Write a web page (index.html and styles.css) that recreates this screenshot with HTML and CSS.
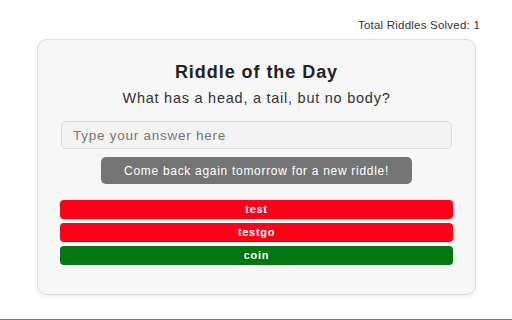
FILE: index.html
```html
<!DOCTYPE html>
<html>
<head>
<meta charset="utf-8">
<link rel="stylesheet" href="styles.css">
</head>
<body>
<div class="page">
  <div class="total">Total Riddles Solved: 1</div>
  <div class="card">
    <h1 class="title">Riddle of the Day</h1>
    <p class="question">What has a head, a tail, but no body?</p>
    <input class="answer" type="text" placeholder="Type your answer here">
    <button class="come-back">Come back again tomorrow for a new riddle!</button>
    <div class="guesses">
      <div class="guess wrong">test</div>
      <div class="guess wrong">testgo</div>
      <div class="guess right">coin</div>
    </div>
  </div>
</div>
</body>
</html>
```
FILE: styles.css
```css
html, body {
  margin: 0;
  padding: 0;
  background: #ffffff;
}
body {
  height: 320px;
  box-sizing: border-box;
  border-bottom: 1px solid #7a7a7a;
  font-family: "Liberation Sans", Arial, sans-serif;
}
.page {
  display: flex;
  flex-direction: column;
}
.total {
  text-align: right;
  font-size: 11.5px;
  line-height: 14px;
  color: #333;
  padding: 18px 32px 0 0;
  height: 21px;
  letter-spacing: 0.22px;
}
.card {
  margin-left: 37px;
  width: 439px;
  height: 256px;
  box-sizing: border-box;
  background: #f7f7f7;
  border: 1px solid #dddddd;
  border-radius: 10px;
  box-shadow: 0 2px 6px rgba(0,0,0,0.07);
  padding: 20px 23px 0 23px;
  display: flex;
  flex-direction: column;
  align-items: center;
}
.title {
  margin: 0;
  font-size: 18px;
  line-height: 24px;
  font-weight: bold;
  color: #222;
  letter-spacing: 0.95px;
}
.question {
  margin: 4px 0 0 0;
  font-size: 14.5px;
  line-height: 20px;
  color: #333;
  letter-spacing: 0.75px;
}
.answer {
  margin: 13px 0 0 0;
  width: 391px;
  height: 28px;
  box-sizing: border-box;
  border: 1px solid #dddddd;
  border-radius: 5px;
  background: #f3f3f3;
  padding: 0 11px;
  font-family: "Liberation Sans", Arial, sans-serif;
  font-size: 13.5px;
  letter-spacing: 0.75px;
  color: #333;
  outline: none;
}
.answer::placeholder {
  color: #767676;
}
.come-back {
  margin-top: 8px;
  width: 311px;
  height: 27px;
  border: none;
  border-radius: 5px;
  background: #757575;
  color: #fff;
  font-family: "Liberation Sans", Arial, sans-serif;
  font-size: 12px;
  letter-spacing: 0.7px;
  padding: 0;
}
.guesses {
  margin-top: 16px;
  width: 393px;
  display: flex;
  flex-direction: column;
  gap: 4px;
}
.guess {
  height: 19px;
  border-radius: 4px;
  color: #fff;
  font-weight: bold;
  font-size: 11px;
  letter-spacing: 0.7px;
  line-height: 19px;
  text-align: center;
}
.wrong {
  background: #ff0016;
}
.right {
  background: #037513;
}
```
